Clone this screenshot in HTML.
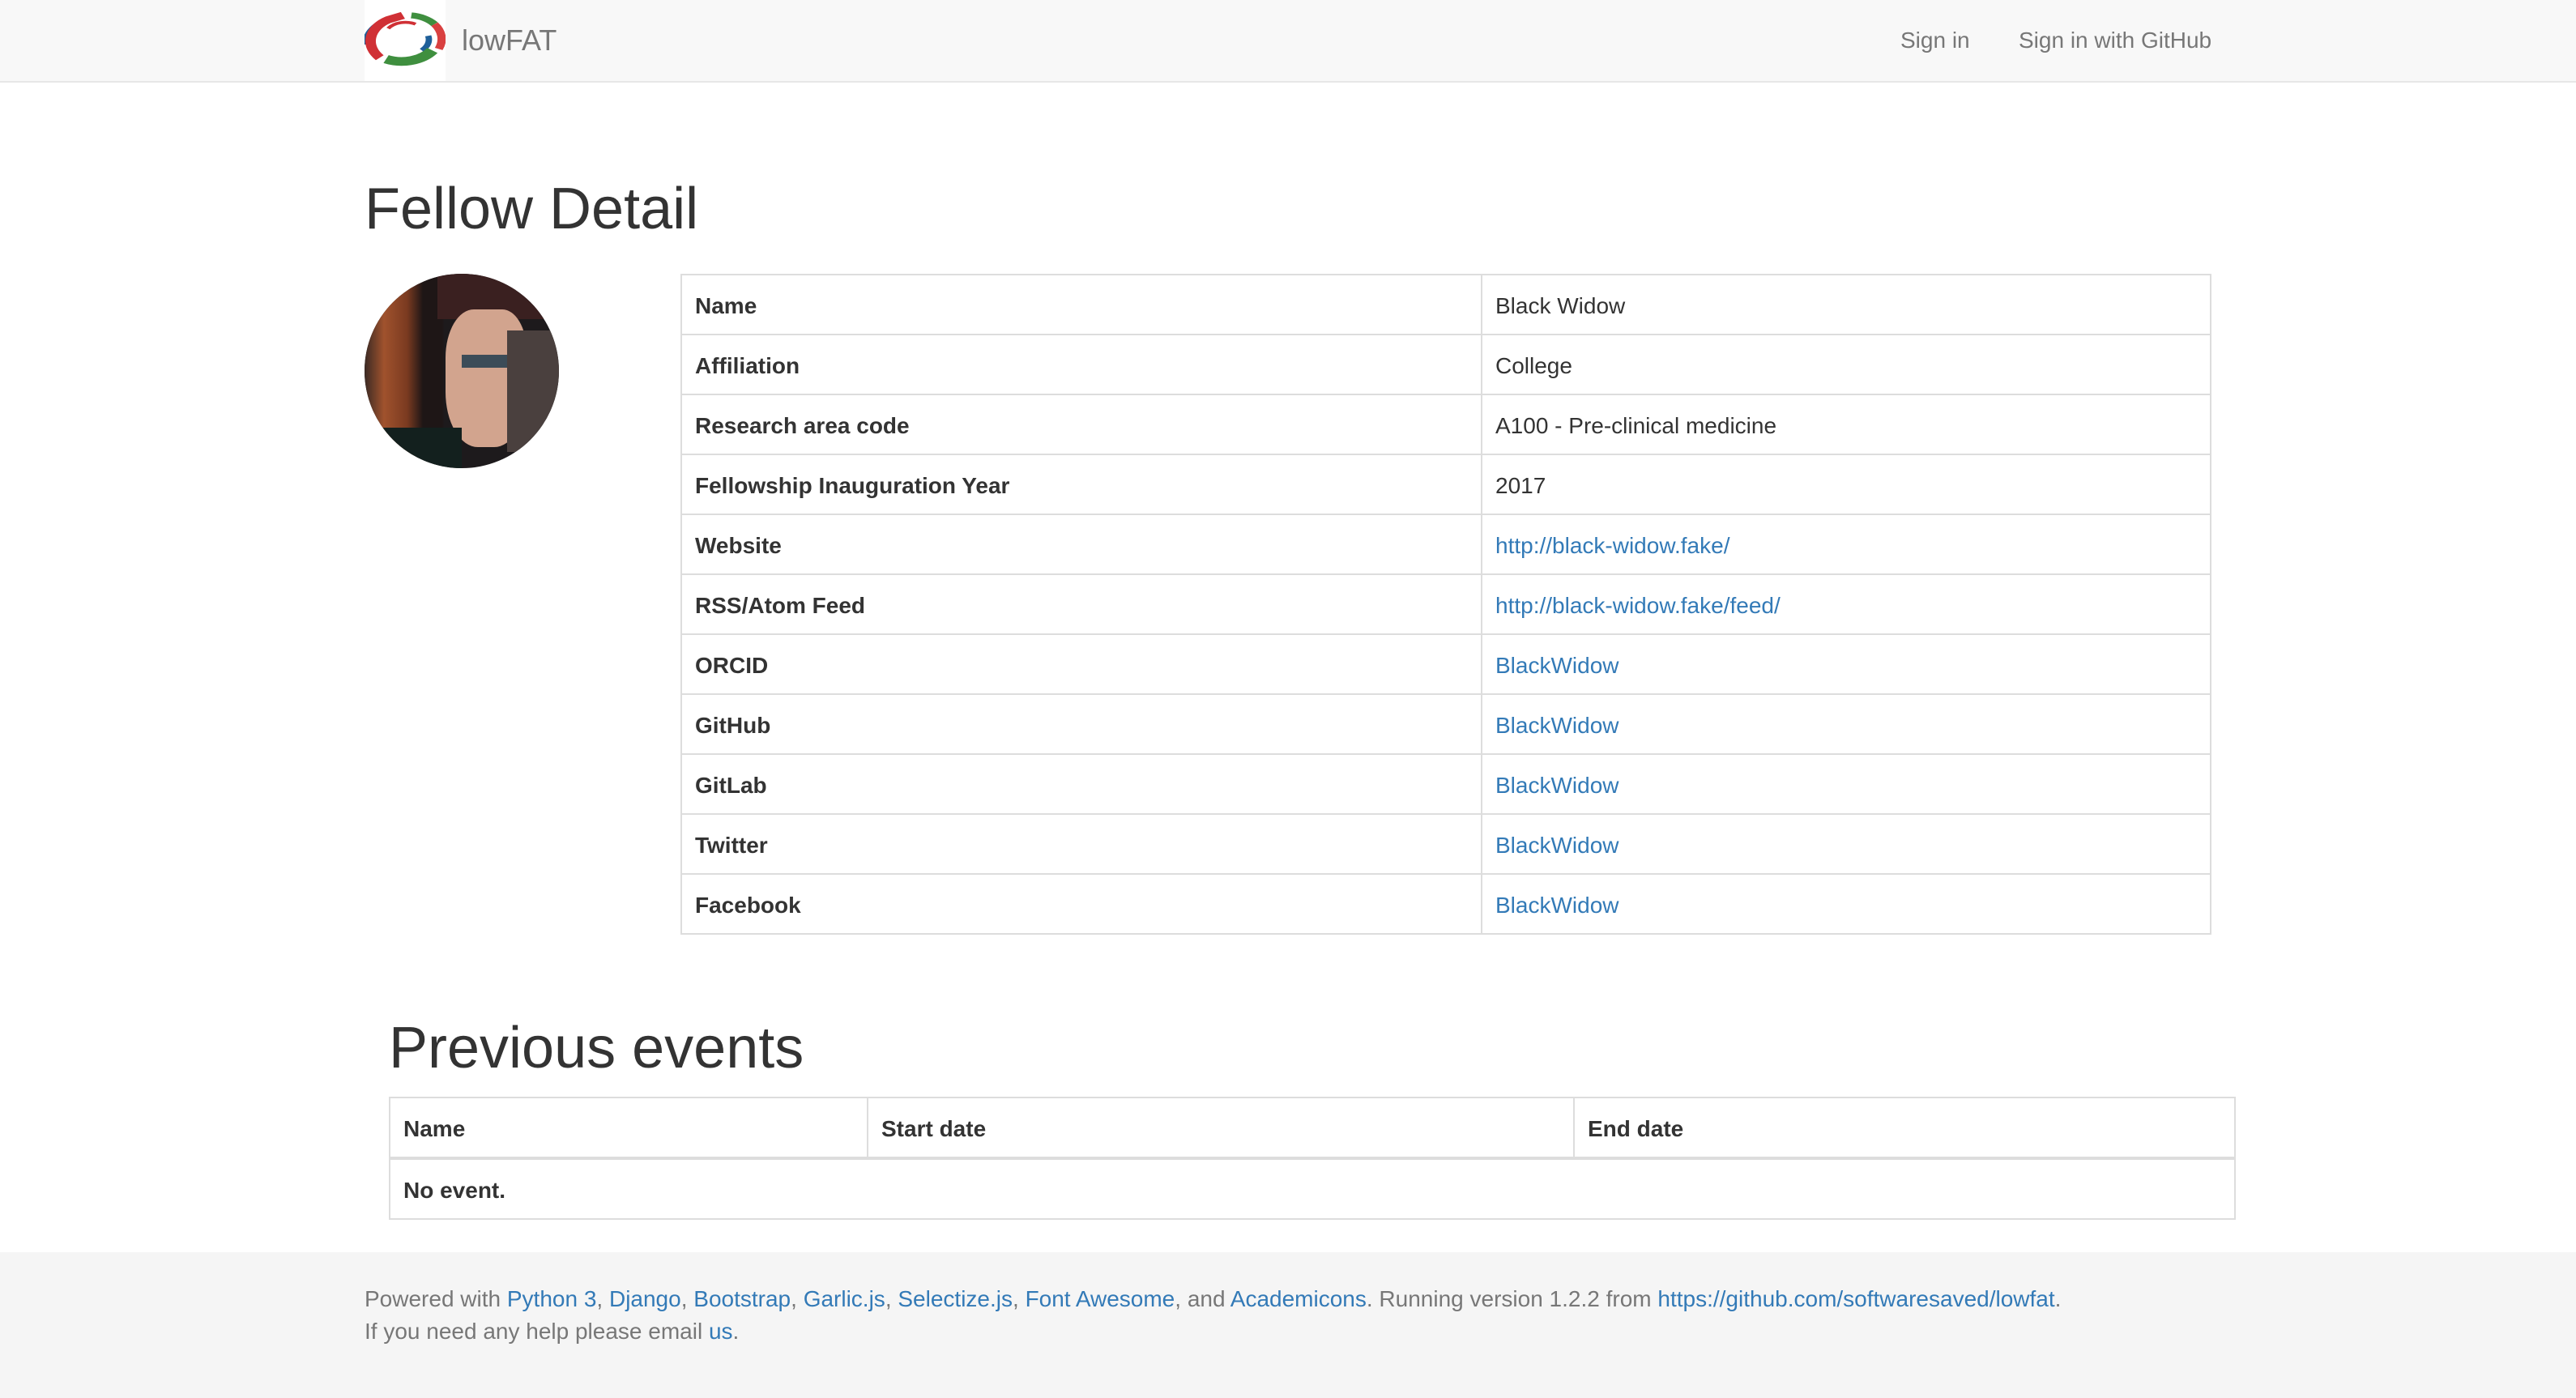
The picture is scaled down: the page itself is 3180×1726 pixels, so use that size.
<!DOCTYPE html>
<html><head><meta charset="utf-8"><style>
html{zoom:2}
*{box-sizing:border-box}
body{margin:0;width:1590px;height:863px;overflow:hidden;background:#fff;font-family:"Liberation Sans",Helvetica,Arial,sans-serif;font-size:14px;line-height:20px;color:#333;position:relative}
a{color:#337ab7;text-decoration:none}
.nav{position:absolute;left:0;top:0;width:1590px;height:51px;background:#f8f8f8;border-bottom:1px solid #e7e7e7}
.logo{position:absolute;left:225px;top:0;width:50px;height:50px;background:#fff}
.brand{position:absolute;left:285px;top:15px;font-size:18px;color:#777;line-height:20px}
.nl{position:absolute;top:15px;color:#777;font-size:14px}
h1{position:absolute;left:225px;top:109px;margin:0;font-size:36px;font-weight:500;line-height:40px}
h2{position:absolute;left:240px;top:627px;margin:0;font-size:36px;font-weight:500;line-height:40px}
.av{position:absolute;left:225px;top:169px;width:120px;height:120px;border-radius:50%;overflow:hidden;background:#1d1a1c}
table{border-collapse:collapse;position:absolute}
td,th{border:1px solid #ddd;padding:9px 8px 7px;text-align:left;vertical-align:top;line-height:20px}
th{font-weight:bold}
.footer{position:absolute;left:0;top:773px;width:1590px;height:90px;background:#f5f5f5;color:#777}
.footer p{position:absolute;left:225px;margin:0;top:19px;white-space:nowrap}
</style></head><body>
<div class="nav">
 <div class="logo"><svg width="50" height="50" viewBox="0 0 50 50">
 <g transform="translate(25,23) scale(1.3,0.9) translate(-25,-23)">
  <path d="M6 28 A19 19 0 0 1 21 9" fill="none" stroke="#1f5f99" stroke-width="2.5"/>
  <path d="M13 37 A17 17 0 0 1 17 11 L24 8" fill="none" stroke="#d03035" stroke-width="5"/>
  <path d="M17 17 A10 10 0 0 1 30 14" fill="none" stroke="#d03035" stroke-width="2"/>
  <path d="M28 8 A17 17 0 0 1 39 14" fill="none" stroke="#3f8f3f" stroke-width="4"/>
  <path d="M39 14 A17 17 0 0 1 41 31" fill="none" stroke="#d94040" stroke-width="4"/>
  <path d="M36 22 A10 10 0 0 1 33 32" fill="none" stroke="#1f5f99" stroke-width="3"/>
  <path d="M38 32 A18 18 0 0 1 16 38" fill="none" stroke="#3f8f3f" stroke-width="6"/>
 </g>
 </svg></div>
 <div class="brand">lowFAT</div>
 <div class="nl" style="left:1173px">Sign in</div>
 <div class="nl" style="left:1246px">Sign in with GitHub</div>
</div>
<h1>Fellow Detail</h1>
<div class="av">
 <div style="position:absolute;left:0;top:0;width:120px;height:120px;background:linear-gradient(90deg,#3a2a24 0%,#a0522d 10%,#7a3a20 22%,#1e1616 30%,#1e1616 40%,transparent 41%)"></div>
 <div style="position:absolute;left:45px;top:0;width:75px;height:28px;background:#3a2020"></div>
 <div style="position:absolute;left:50px;top:22px;width:50px;height:85px;background:#d2a48e;border-radius:35% 30% 40% 40%"></div>
 <div style="position:absolute;left:60px;top:50px;width:55px;height:8px;background:#3c4c58"></div>
 <div style="position:absolute;left:88px;top:35px;width:32px;height:75px;background:#4a403e"></div>
 <div style="position:absolute;left:0;top:95px;width:60px;height:25px;background:#13201e"></div>
</div>
<table style="left:420px;top:169px;width:945px">
<tr><th style="width:494px">Name</th><td>Black Widow</td></tr>
<tr><th>Affiliation</th><td>College</td></tr>
<tr><th>Research area code</th><td>A100 - Pre-clinical medicine</td></tr>
<tr><th>Fellowship Inauguration Year</th><td>2017</td></tr>
<tr><th>Website</th><td><a>http://black-widow.fake/</a></td></tr>
<tr><th>RSS/Atom Feed</th><td><a>http://black-widow.fake/feed/</a></td></tr>
<tr><th>ORCID</th><td><a>BlackWidow</a></td></tr>
<tr><th>GitHub</th><td><a>BlackWidow</a></td></tr>
<tr><th>GitLab</th><td><a>BlackWidow</a></td></tr>
<tr><th>Twitter</th><td><a>BlackWidow</a></td></tr>
<tr><th>Facebook</th><td><a>BlackWidow</a></td></tr>
</table>
<h2>Previous events</h2>
<table style="left:240px;top:677px;width:1140px">
<tr><th style="width:295px;border-bottom:2px solid #ddd">Name</th><th style="width:436px;border-bottom:2px solid #ddd">Start date</th><th style="border-bottom:2px solid #ddd">End date</th></tr>
<tr><th colspan="3">No event.</th></tr>
</table>
<div class="footer">
<p>Powered with <a>Python 3</a>, <a>Django</a>, <a>Bootstrap</a>, <a>Garlic.js</a>, <a>Selectize.js</a>, <a>Font Awesome</a>, and <a>Academicons</a>. Running version 1.2.2 from <a>https://github.com/softwaresaved/lowfat</a>.<br>If you need any help please email <a>us</a>.</p>
</div>
</body></html>
